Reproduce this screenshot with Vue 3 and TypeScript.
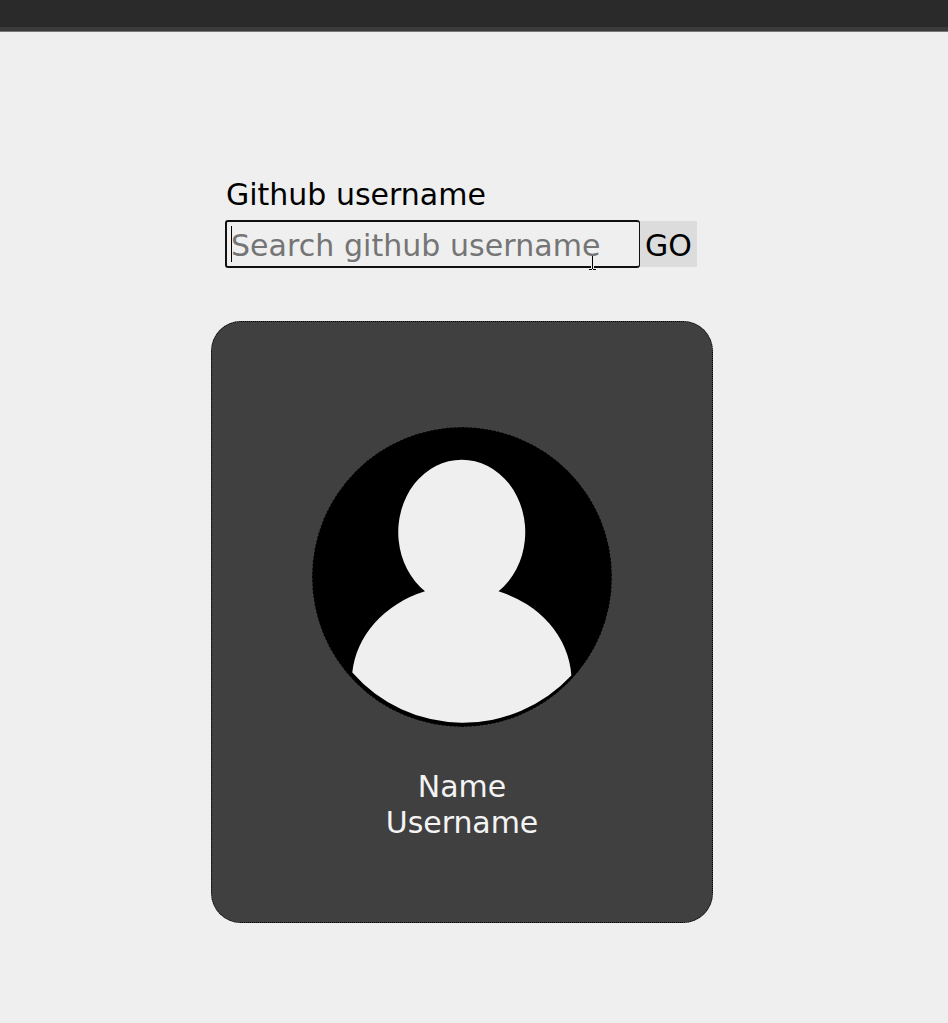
<script setup lang="ts">
import { ref } from 'vue'

const query = ref('')
const user = { name: 'Name', username: 'Username' }
</script>

<template>
  <div class="page">
    <header class="topbar"></header>
    <main class="content">
      <form class="search" @submit.prevent>
        <label class="label" for="username">Github username</label>
        <div class="row">
          <div class="field">
            <input id="username" v-model="query" class="input" type="text" placeholder="Search github username" />
            <span class="caret"></span>
            <svg class="ibeam" width="9" height="16" viewBox="0 0 9 16" shape-rendering="crispEdges">
              <path d="M4 1h1v11h-1z" fill="#000" />
              <path d="M3 11h1v2h-1zM5 11h1v2h-1zM4 12h1v1h-1z" fill="#eee" />
              <path d="M4 12h1v1h-1zM1 14h3v1h-3zM5 14h3v1h-3zM4 13h1v1h-1z" fill="#000" />
            </svg>
          </div>
          <button class="go" type="submit">GO</button>
        </div>
      </form>
      <section class="card">
        <svg class="avatar" width="300" height="300" viewBox="0 0 300 300">
          <circle cx="150" cy="150" r="150" fill="#000" />
          <circle cx="150" cy="150" r="149.800" fill="none" stroke="#808080" stroke-width="0.500" stroke-dasharray="1 3" />
          <path
            d="M113 164.300A63.500 72.500 0 1 1 186.500 164.300A109.500 95 0 0 1 259.300 248.500A147.500 147.500 0 0 1 40.300 245.500A110 95 0 0 1 113 164.300Z"
            fill="#efefef"
          />
        </svg>
        <div class="details">
          <div>{{ user.name }}</div>
          <div>{{ user.username }}</div>
        </div>
      </section>
    </main>
  </div>
</template>

<style>
body {
  background: #efefef;
}
</style>

<style scoped>
.page {
  box-sizing: border-box;
  height: 1023px;
  overflow: hidden;
  background: #efefef;
  color: #000;
  font-family: "DejaVu Sans", Verdana, sans-serif;
  font-size: 30px;
  line-height: 36px;
}
.topbar {
  box-sizing: border-box;
  height: 32px;
  background: linear-gradient(#2a2a2a 27px, #3b3b3b 27px, #3b3b3b 31px, #777 31px);
}
.content {
  width: 502px;
  margin-left: 211px;
  padding-top: 145px;
}
.search {
  margin-left: 14px;
}
.label {
  display: block;
  height: 43px;
  padding-left: 1px;
}
.row {
  display: flex;
  align-items: center;
  height: 48px;
}
.field {
  position: relative;
  width: 415px;
  height: 48px;
}
.input {
  box-sizing: border-box;
  display: block;
  width: 415px;
  height: 48px;
  margin: 0;
  padding: 2px 4px 0;
  border: 2px solid #101010;
  border-right-width: 1px;
  border-radius: 3px;
  outline: none;
  background: transparent;
  color: #000;
  font: inherit;
  letter-spacing: 0.05px;
}
.input::placeholder {
  color: #757575;
  opacity: 1;
}
.caret {
  position: absolute;
  left: 6px;
  top: 6px;
  width: 1px;
  height: 36px;
  background: #000;
}
.ibeam {
  position: absolute;
  left: 363px;
  top: 35px;
}
.go {
  width: 57px;
  height: 46px;
  padding: 3px 0 0;
  border: 0;
  background: #dcdcdc;
  color: #000;
  font: inherit;
}
.card {
  box-sizing: border-box;
  display: flex;
  flex-direction: column;
  align-items: center;
  width: 502px;
  height: 602px;
  margin-top: 53px;
  padding-top: 105px;
  border: 1px dotted #000;
  border-radius: 30px;
  background: #404040;
}
.avatar {
  display: block;
}
.details {
  margin-top: 42px;
  color: #f4f4f4;
  text-align: center;
  letter-spacing: -0.05px;
}
</style>
